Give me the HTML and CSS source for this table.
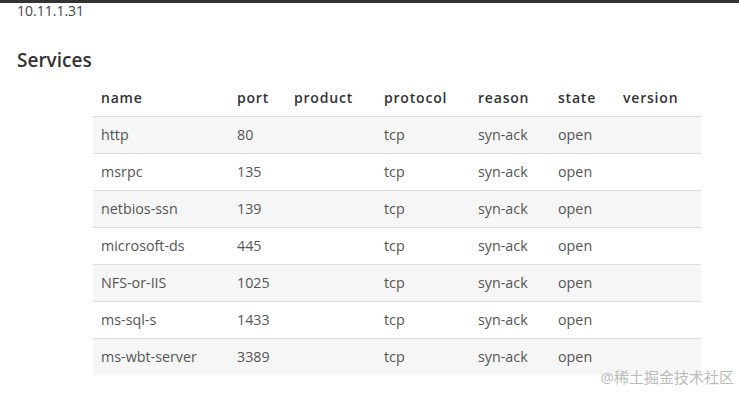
FILE: index.html
```html
<!DOCTYPE html>
<html lang="en">
<head>
    <meta charset="UTF-8">
    <title>Host 10.11.1.31</title>
    <link rel="stylesheet" href="styles.css">
</head>
<body>
    <div class="topbar"></div>
    <div class="host">10.11.1.31</div>

    <h2>Services</h2>

    <table class="services">
        <colgroup>
            <col style="width: 136px">
            <col style="width: 57px">
            <col style="width: 90px">
            <col style="width: 94px">
            <col style="width: 80px">
            <col style="width: 65px">
            <col style="width: 86px">
        </colgroup>
        <thead>
            <tr>
                <th>name</th>
                <th>port</th>
                <th>product</th>
                <th>protocol</th>
                <th>reason</th>
                <th>state</th>
                <th>version</th>
            </tr>
        </thead>
        <tbody>
            <tr><td>http</td><td>80</td><td></td><td>tcp</td><td>syn-ack</td><td>open</td><td></td></tr>
            <tr><td>msrpc</td><td>135</td><td></td><td>tcp</td><td>syn-ack</td><td>open</td><td></td></tr>
            <tr><td>netbios-ssn</td><td>139</td><td></td><td>tcp</td><td>syn-ack</td><td>open</td><td></td></tr>
            <tr><td>microsoft-ds</td><td>445</td><td></td><td>tcp</td><td>syn-ack</td><td>open</td><td></td></tr>
            <tr><td>NFS-or-IIS</td><td>1025</td><td></td><td>tcp</td><td>syn-ack</td><td>open</td><td></td></tr>
            <tr><td>ms-sql-s</td><td>1433</td><td></td><td>tcp</td><td>syn-ack</td><td>open</td><td></td></tr>
            <tr><td>ms-wbt-server</td><td>3389</td><td></td><td>tcp</td><td>syn-ack</td><td>open</td><td></td></tr>
        </tbody>
    </table>

    <div class="watermark">@稀土掘金技术社区</div>
</body>
</html>
```

FILE: styles.css
```css
* {
    box-sizing: border-box;
    margin: 0;
    padding: 0;
    font-family: 'Open Sans', 'Noto Sans', 'Noto Sans CJK SC', sans-serif;
}

body {
    background-color: white;
    color: #333;
    height: 393px;
    overflow: hidden;
    position: relative;
}

.topbar {
    height: 3px;
    background-color: #333;
}

.host {
    padding-left: 17px;
    font-size: 14px;
    line-height: 15px;
    color: #444;
}

h2 {
    margin: 30px 0 0 17px;
    font-size: 19px;
    font-weight: 600;
    line-height: 24px;
    color: #333;
}

.services {
    margin: 8px 0 0 93px;
    width: 608px;
    table-layout: fixed;
    border-collapse: collapse;
    font-size: 14.3px;
}

.services th {
    text-align: left;
    font-weight: 600;
    font-size: 14px;
    letter-spacing: 0.8px;
    color: #333;
    height: 36px;
    padding: 0 8px;
    vertical-align: middle;
}

.services td {
    height: 37px;
    padding: 0 8px;
    border-top: 1px solid #ddd;
    color: #555;
    vertical-align: middle;
}

.services tbody tr:nth-child(odd) {
    background-color: #f6f6f6;
}

.watermark {
    position: absolute;
    right: 5px;
    bottom: 6px;
    font-size: 15px;
    color: #bbb;
}
```
